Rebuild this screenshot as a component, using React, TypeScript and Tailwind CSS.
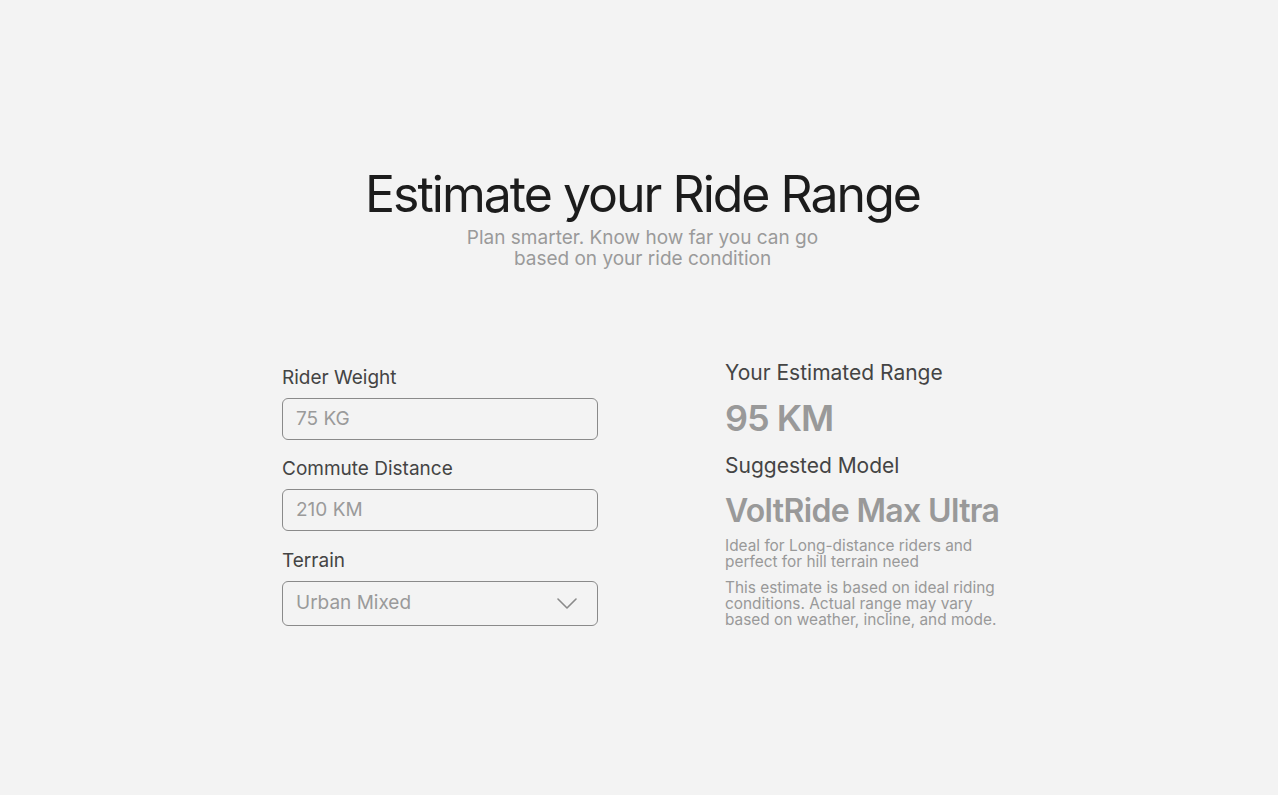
import React from "react";

export default function App() {
  const font = { fontFamily: "Inter, 'Noto Sans', sans-serif" };
  return (
    <div className="min-h-[795px] w-full bg-[#f3f3f3] text-[#1c1c1c]" style={font}>
      <div className="flex flex-col items-center pl-[7px] pt-[166px]">
        <h1 className="text-[50px] leading-[56px] font-normal tracking-[-2px] text-[#1c1c1c]">
          Estimate your Ride Range
        </h1>
        <p className="mt-[5px] text-center text-[19px] leading-[21px] text-[#9a9a9a]">
          Plan smarter. Know how far you can go
          <br />
          based on your ride condition
        </p>
      </div>

      <div className="mt-[91px] flex justify-center gap-[127px] pl-[5px]">
        <div className="flex w-[316px] flex-col pt-[6px]">
          <label className="text-[19px] leading-[24px] text-[#444]">Rider Weight</label>
          <div className="mt-[8px] flex h-[42px] items-center rounded-[6px] border border-[#8a8a8a] px-[13px] text-[19px] text-[#9a9a9a]">
            75 KG
          </div>
          <label className="mt-[17px] text-[19px] leading-[24px] text-[#444]">Commute Distance</label>
          <div className="mt-[8px] flex h-[42px] items-center rounded-[6px] border border-[#8a8a8a] px-[13px] text-[19px] text-[#9a9a9a]">
            210 KM
          </div>
          <label className="mt-[18px] text-[19px] leading-[24px] text-[#444]">Terrain</label>
          <div className="mt-[8px] flex h-[45px] items-center justify-between rounded-[6px] border border-[#8a8a8a] pl-[13px] pr-[20px] text-[19px] text-[#9a9a9a]">
            <span>Urban Mixed</span>
            <svg width="20" height="11" viewBox="0 0 20 11" fill="none">
              <path d="M1 1l9 9 9-9" stroke="#8a8a8a" strokeWidth="1.6" strokeLinecap="round" strokeLinejoin="round" />
            </svg>
          </div>
        </div>

        <div className="flex w-[276px] flex-col whitespace-nowrap">
          <div className="text-[21px] leading-[26px] text-[#444]">Your Estimated Range</div>
          <div className="mt-[12px] text-[36px] font-semibold leading-[40px] tracking-[-1px] text-[#999]">95 KM</div>
          <div className="mt-[15px] text-[21px] leading-[26px] text-[#444]">Suggested Model</div>
          <div className="mt-[12px] text-[32px] font-semibold leading-[40px] tracking-[-0.65px] text-[#999]">VoltRide Max Ultra</div>
          <p className="mt-[7px] text-[15.4px] leading-[16px] text-[#999]">
            Ideal for Long-distance riders and
            <br />
            perfect for hill terrain need
          </p>
          <p className="mt-[10px] text-[15.4px] leading-[16px] text-[#999]">
            This estimate is based on ideal riding
            <br />
            conditions. Actual range may vary
            <br />
            based on weather, incline, and mode.
          </p>
        </div>
      </div>
    </div>
  );
}
